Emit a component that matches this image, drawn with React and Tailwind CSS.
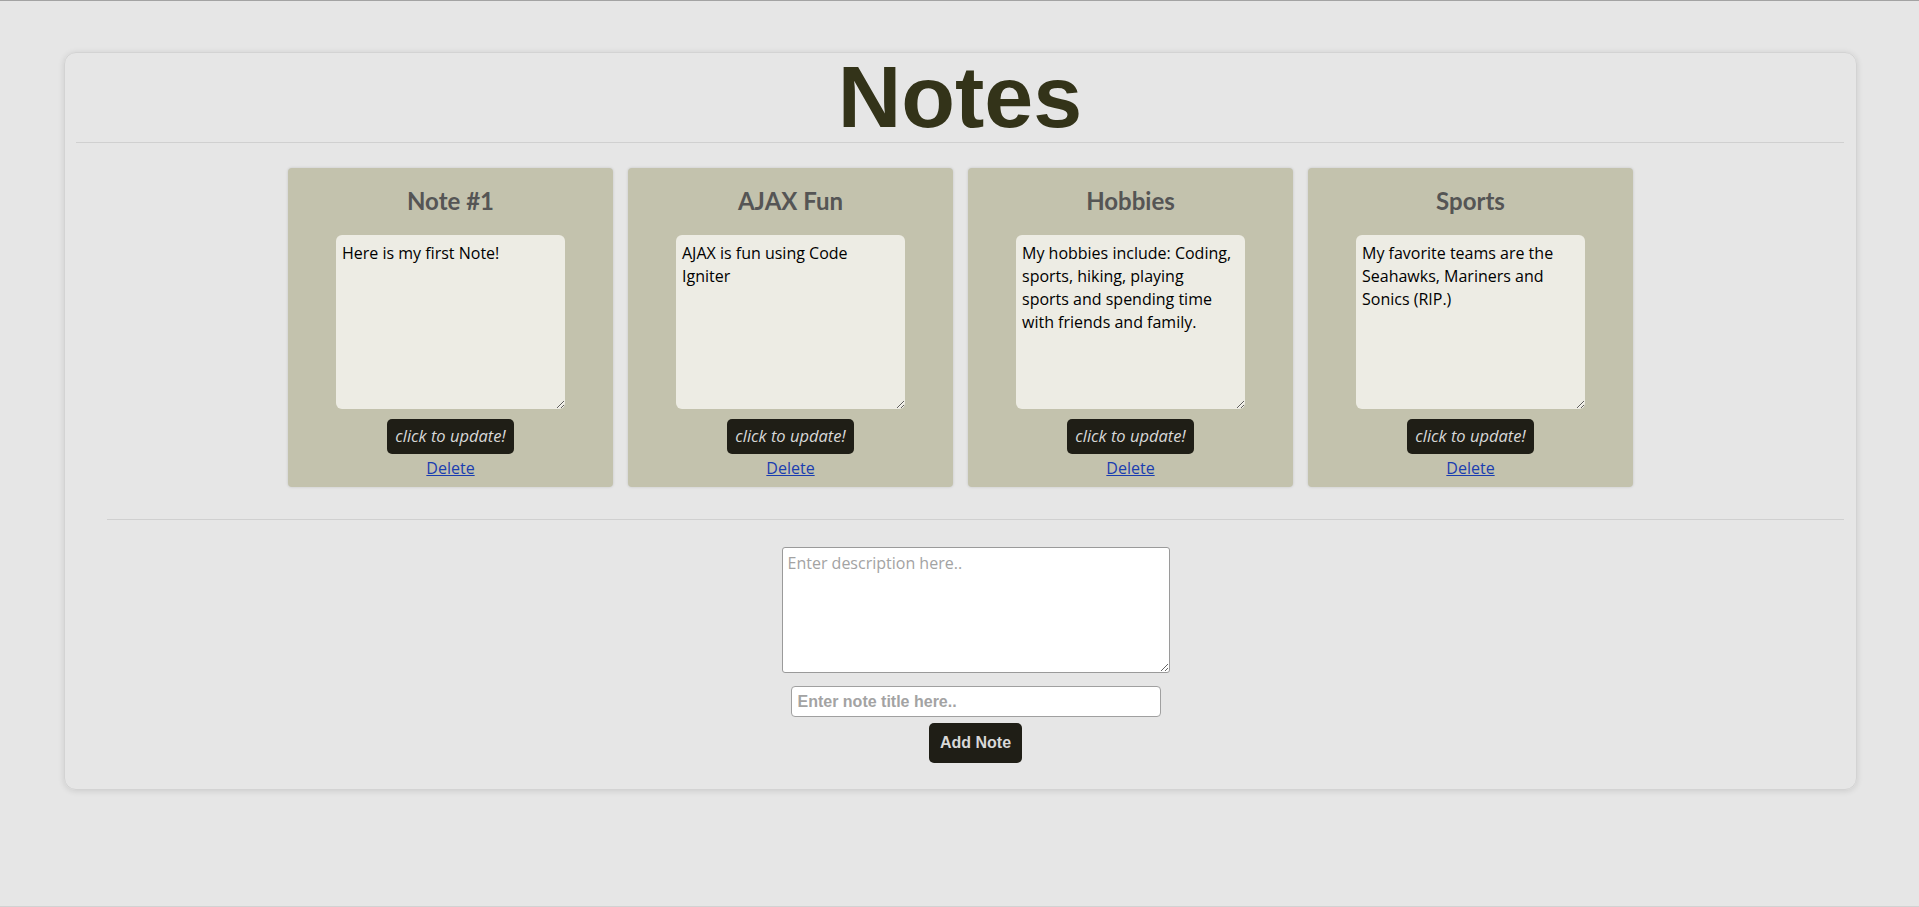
import React from 'react';

const notes = [
  { id: 1, title: 'Note #1', body: 'Here is my first Note!' },
  { id: 2, title: 'AJAX Fun', body: 'AJAX is fun using Code Igniter' },
  {
    id: 3,
    title: 'Hobbies',
    body: 'My hobbies include: Coding, sports, hiking, playing sports and spending time with friends and family.',
  },
  { id: 4, title: 'Sports', body: 'My favorite teams are the Seahawks, Mariners and Sonics (RIP.)' },
];

const NoteCard = ({ note }) => (
  <div className="w-[325px] h-[319px] bg-[#c3c2ad] rounded-[4px] shadow-[0_0_3px_rgba(0,0,0,0.15)] flex flex-col items-center pt-[19px]">
    <h2 className="text-[24px] leading-[28px] font-bold text-[#555555] font-['Lato',sans-serif]">{note.title}</h2>
    <textarea
      className="mt-[20px] w-[229px] h-[174px] bg-[#edece4] rounded-[6px] pl-[6px] pr-[12px] pt-[7px] pb-[4px] text-[16px] leading-[23px] text-black outline-none"
      defaultValue={note.body}
    />
    <button
      type="button"
      className="mt-[10px] w-[127px] h-[35px] rounded-[5px] bg-[#1f1e16] text-[#d8d8d8] italic text-[16.5px]"
    >
      click to update!
    </button>
    <a href="#" className="mt-[4px] text-[16px] leading-[20px] underline text-[#1a3db0]">
      Delete
    </a>
  </div>
);

const App = () => {
  return (
    <div className="h-[907px] bg-[#e6e6e6] border-t border-t-[#a3a3a3] border-b border-b-[#d2d2d2] pt-[51px] font-['Open_Sans',sans-serif]">
      <div className="ml-[64px] w-[1793px] rounded-[12px] border border-[#d3d3d3] shadow-[0_1px_6px_rgba(0,0,0,0.12)] pb-[26px]">
        <div className="ml-[11px] mr-[12px]">
          <h1 className="text-center text-[88px] leading-none font-bold text-[#333319] font-['Liberation_Sans',Arial,sans-serif]">
            Notes
          </h1>
          <hr className="mt-[1px] border-0 border-t border-[#d0d0d0]" />
        </div>

        <div className="mt-[25px] flex justify-center gap-[15px]">
          {notes.map((note) => (
            <NoteCard key={note.id} note={note} />
          ))}
        </div>

        <div className="ml-[42px] mr-[12px] mt-[32px]">
          <hr className="border-0 border-t border-[#d0d0d0]" />
          <div className="flex flex-col items-center">
            <textarea
              className="mt-[27px] w-[388px] h-[126px] bg-white border border-[#9a9a9a] rounded-[3px] px-[5px] pt-[5px] pb-[3px] text-[16px] leading-[20px] placeholder:text-[#a3a3a3] outline-none"
              placeholder="Enter description here.."
            />
            <input
              type="text"
              className="mt-[13px] w-[370px] h-[31px] bg-white border border-[#a0a0a0] rounded-[4px] px-[6px] text-[16px] font-bold font-['Liberation_Sans',Arial,sans-serif] placeholder:text-[#a3a3a3] outline-none"
              placeholder="Enter note title here.."
            />
            <button
              type="button"
              className="mt-[6px] h-[40px] px-[11px] rounded-[5px] bg-[#1f1e16] text-[#d8d8d8] text-[16px] font-bold font-['Liberation_Sans',Arial,sans-serif]"
            >
              Add Note
            </button>
          </div>
        </div>
      </div>
    </div>
  );
};

export default App;
